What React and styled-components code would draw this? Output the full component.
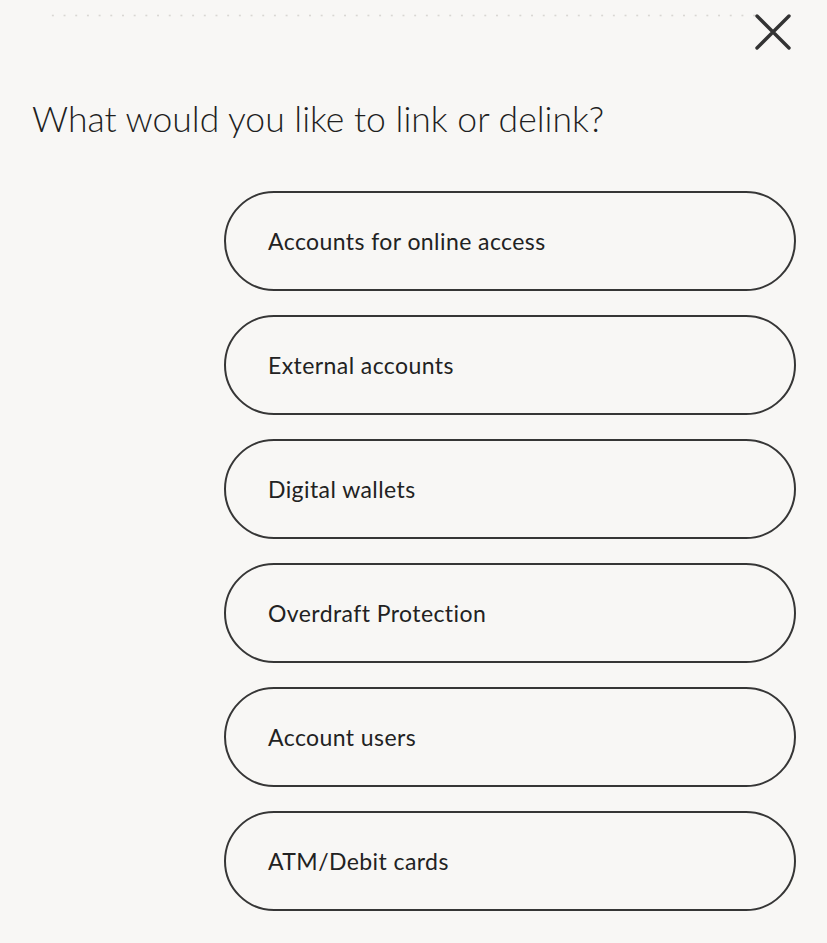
import styled, { createGlobalStyle } from "styled-components";

const Global = createGlobalStyle`
  html, body {
    margin: 0;
    padding: 0;
    background: #f8f7f5;
  }
  body {
    font-family: Lato, "Open Sans", sans-serif;
    color: #222;
  }
`;

const Page = styled.div`
  width: 827px;
  min-height: 943px;
  box-sizing: border-box;
  padding: 0 31px 0 32px;
  display: flex;
  flex-direction: column;
`;

const TopBar = styled.div`
  height: 64px;
  display: flex;
  align-items: flex-start;
  justify-content: flex-end;
  padding-top: 13px;
  box-sizing: border-box;
  position: relative;
`;

const Dots = styled.div`
  position: absolute;
  left: 15px;
  right: 40px;
  top: 14px;
  height: 3px;
  background-image: radial-gradient(circle, #d9d7d3 0.9px, transparent 1.2px);
  background-size: 11.7px 3px;
  background-repeat: repeat-x;
`;

const CloseButton = styled.button`
  background: none;
  border: none;
  padding: 0;
  margin-right: 4px;
  width: 38px;
  height: 38px;
  cursor: pointer;
  display: flex;
  align-items: center;
  justify-content: center;
`;

const Title = styled.h1`
  margin: 33px 0 0;
  font-family: Lato, sans-serif;
  font-weight: 300;
  font-size: 35.5px;
  line-height: 44px;
  color: #1f1f1f;
  letter-spacing: 0;
`;

const OptionList = styled.div`
  margin-top: 50px;
  padding-left: 192px;
  display: flex;
  flex-direction: column;
  gap: 24px;
`;

const Option = styled.button`
  width: 572px;
  height: 100px;
  box-sizing: border-box;
  border: 2px solid #363636;
  border-radius: 50px;
  background: transparent;
  padding: 0 0 0 42px;
  text-align: left;
  font-family: Lato, sans-serif;
  font-size: 23px;
  font-weight: 400;
  color: #222;
  letter-spacing: 0.42px;
  cursor: pointer;
`;

const options = [
  "Accounts for online access",
  "External accounts",
  "Digital wallets",
  "Overdraft Protection",
  "Account users",
  "ATM/Debit cards",
];

export default function App() {
  return (
    <Page>
      <Global />
      <TopBar>
        <Dots />
        <CloseButton aria-label="Close">
          <svg width="38" height="38" viewBox="0 0 38 38">
            <path d="M3 3 L35 35 M35 3 L3 35" stroke="#333" strokeWidth="3.4" strokeLinecap="round" />
          </svg>
        </CloseButton>
      </TopBar>
      <Title>What would you like to link or delink?</Title>
      <OptionList>
        {options.map((o) => (
          <Option key={o}>{o}</Option>
        ))}
      </OptionList>
    </Page>
  );
}
